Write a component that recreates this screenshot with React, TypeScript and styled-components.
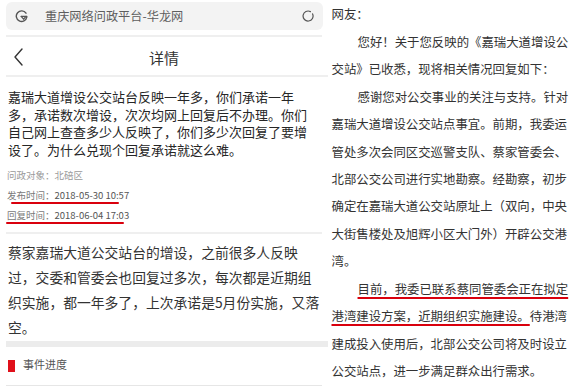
import React from "react";
import styled, { createGlobalStyle } from "styled-components";

const Global = createGlobalStyle`
  html, body { margin: 0; padding: 0; background: #fff; }
  body {
    font-family: "Noto Sans CJK SC", "Noto Sans", "Liberation Sans", sans-serif;
    color: #333;
  }
`;

const Page = styled.div`
  display: flex;
  width: 580px;
  height: 388px;
  overflow: hidden;
  background: #fff;
`;

const LeftPanel = styled.div`
  width: 322px;
  flex: none;
  padding-left: 6px;
  display: flex;
  flex-direction: column;
`;

const AddressBar = styled.div`
  margin-top: 2px;
  margin-bottom: 5px;
  width: 317px;
  height: 28px;
  border-radius: 6px;
  background: #f3f3f3;
  display: flex;
  align-items: center;
  padding: 0 9px 0 9px;
  box-sizing: border-box;
  gap: 17px;
`;

const AddrText = styled.span`
  flex: 1;
  font-size: 12.2px;
  color: #5e5e5e;
  line-height: 1;
  white-space: nowrap;
`;

const Rule = styled.div<{ $width: number; $thick?: number; $tone?: string }>`
  width: ${(p) => p.$width}px;
  height: ${(p) => p.$thick ?? 2}px;
  background: ${(p) => p.$tone ?? "#efefef"};
  flex: none;
`;

const NavBar = styled.div`
  position: relative;
  height: 38px;
  width: 316px;
  display: flex;
  align-items: center;
  justify-content: center;
`;

const BackButton = styled.div`
  position: absolute;
  left: 7px;
  top: 10px;
  width: 12px;
  height: 20px;
  display: flex;
`;

const NavTitle = styled.div`
  font-size: 15px;
  color: #333;
  line-height: 1;
  margin-top: 2px;
`;

const Title = styled.div`
  padding: 11px 0 0 2px;
  font-size: 13px;
  line-height: 17.5px;
  color: #262626;
  white-space: nowrap;
`;

const MetaList = styled.div`
  padding: 7px 0 7px 1px;
  display: flex;
  flex-direction: column;
`;

const MetaRow = styled.div<{ $muted?: boolean }>`
  height: 20px;
  line-height: 20px;
  font-size: 9.5px;
  color: ${(p) => (p.$muted ? "#9a9a9a" : "#555")};
  white-space: nowrap;
`;

const MetaLabel = styled.span<{ $muted?: boolean }>`
  color: ${(p) => (p.$muted ? "#9a9a9a" : "#7a7a7a")};
`;

const Marked = styled.span<{ $from: number; $to: number }>`
  position: relative;
  &::after {
    content: "";
    position: absolute;
    left: ${(p) => p.$from}px;
    right: ${(p) => p.$to}px;
    bottom: -2px;
    height: 2px;
    border-radius: 1px;
    background: #d9000d;
  }
`;

const Comment = styled.div`
  padding: 6px 0 0 2px;
  font-size: 13.8px;
  line-height: 25px;
  color: #333;
  white-space: nowrap;
  height: 100px;
`;

const Band = styled.div`
  margin-top: 1px;
  width: 322px;
  height: 6px;
  background: #ececec;
`;

const SectionHeader = styled.div`
  height: 38px;
  display: flex;
  align-items: center;
  gap: 8px;
  padding-left: 2px;
  padding-bottom: 1px;
  box-sizing: border-box;
`;

const RedMark = styled.div`
  width: 7px;
  height: 12px;
  background: #e0101a;
`;

const SectionLabel = styled.span`
  font-size: 11px;
  color: #555;
  line-height: 1;
  margin-top: -2px;
`;

const RightPanel = styled.div`
  flex: 1;
  padding: 1.3px 0 0 3.5px;
  font-size: 12.4px;
  line-height: 27.45px;
  color: #333;
`;

const Para = styled.div<{ $indent?: boolean }>`
  text-indent: ${(p) => (p.$indent ? "2.1em" : "0")};
  white-space: nowrap;
`;

const Underlined = styled.span`
  text-decoration: underline;
  text-decoration-color: #d9000d;
  text-decoration-thickness: 2px;
  text-underline-offset: 3px;
`;

const GIcon = () => (
  <svg width="13" height="13" viewBox="0 0 13 13" fill="none">
    <path
      d="M11 3.2A5.3 5.3 0 1 0 11.8 7.2"
      stroke="#555"
      strokeWidth="1.4"
      strokeLinecap="round"
    />
    <path d="M6.2 6.4L8.6 9.2L11 6.4" stroke="#555" strokeWidth="1.3" strokeLinecap="round" strokeLinejoin="round" />
    <path d="M6.3 6.4H11.8" stroke="#555" strokeWidth="1.3" strokeLinecap="round" />
  </svg>
);

const ReloadIcon = () => (
  <svg width="12" height="12" viewBox="0 0 12 12" fill="none">
    <path d="M8.4 1.6A5 5 0 1 0 10.6 3.9" stroke="#555" strokeWidth="1.2" strokeLinecap="round" />
  </svg>
);

const Chevron = () => (
  <svg width="12" height="20" viewBox="0 0 12 20" fill="none">
    <path d="M9 2L2 10L9 18" stroke="#333" strokeWidth="1.4" strokeLinecap="round" strokeLinejoin="round" />
  </svg>
);

export default function App() {
  return (
    <>
      <Global />
      <Page>
        <LeftPanel>
          <AddressBar>
            <GIcon />
            <AddrText>重庆网络问政平台-华龙网</AddrText>
            <ReloadIcon />
          </AddressBar>
          <Rule $width={316} />
          <NavBar>
            <BackButton>
              <Chevron />
            </BackButton>
            <NavTitle>详情</NavTitle>
          </NavBar>
          <Rule $width={322} />
          <Title>
            嘉瑞大道增设公交站台反映一年多，你们承诺一年
            <br />
            多，承诺数次增设，次次均网上回复后不办理。你们
            <br />
            自己网上查查多少人反映了，你们多少次回复了要增
            <br />
            设了。为什么兑现个回复承诺就这么难。
          </Title>
          <MetaList>
            <MetaRow $muted>问政对象：北碚区</MetaRow>
            <MetaRow>
              <Marked $from={4} $to={10}>
                <MetaLabel>发布时间：</MetaLabel>2018-05-30 10:57
              </Marked>
            </MetaRow>
            <MetaRow>
              <Marked $from={-1} $to={5}>
                <MetaLabel>回复时间：</MetaLabel>2018-06-04 17:03
              </Marked>
            </MetaRow>
          </MetaList>
          <Rule $width={316} />
          <Comment>
            蔡家嘉瑞大道公交站台的增设，之前很多人反映
            <br />
            过，交委和管委会也回复过多次，每次都是近期组
            <br />
            织实施，都一年多了，上次承诺是5月份实施，又落
            <br />
            空。
          </Comment>
          <Band />
          <SectionHeader>
            <RedMark />
            <SectionLabel>事件进度</SectionLabel>
          </SectionHeader>
          <Rule $width={316} $thick={1} $tone="#e6e6e6" />
        </LeftPanel>
        <RightPanel>
          <Para>网友：</Para>
          <Para $indent>
            您好！关于您反映的《嘉瑞大道增设公
            <br />
            交站》已收悉，现将相关情况回复如下：
          </Para>
          <Para $indent>
            感谢您对公交事业的关注与支持。针对
            <br />
            嘉瑞大道增设公交站点事宜。前期，我委运
            <br />
            管处多次会同区交巡警支队、蔡家管委会、
            <br />
            北部公交公司进行实地勘察。经勘察，初步
            <br />
            确定在嘉瑞大道公交站原址上（双向，中央
            <br />
            大街售楼处及旭辉小区大门外）开辟公交港
            <br />
            湾。
          </Para>
          <Para $indent>
            <Underlined>目前，我委已联系蔡同管委会正在拟定</Underlined>
            <br />
            <Underlined>港湾建设方案，近期组织实施建设。</Underlined>待港湾
            <br />
            建成投入使用后，北部公交公司将及时设立
            <br />
            公交站点，进一步满足群众出行需求。
          </Para>
        </RightPanel>
      </Page>
    </>
  );
}
